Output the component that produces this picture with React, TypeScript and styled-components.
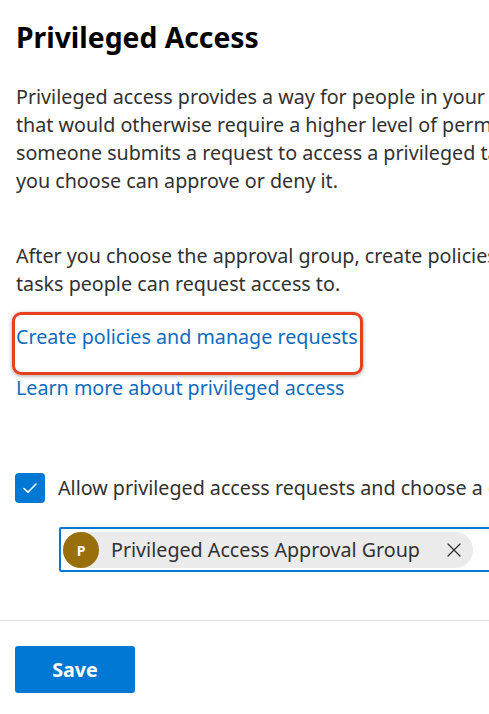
import React from "react";
import styled, { createGlobalStyle } from "styled-components";

const GlobalStyle = createGlobalStyle`
  html, body {
    margin: 0;
    padding: 0;
    background: #ffffff;
    overflow: hidden;
  }
  body {
    font-family: "Noto Sans", "Open Sans", Arial, sans-serif;
    color: #323130;
  }
`;

const Page = styled.div`
  width: 489px;
  height: 714px;
  overflow: hidden;
  background: #ffffff;
  display: flex;
  flex-direction: column;
`;

const Content = styled.div`
  padding: 19px 0 0 16px;
  display: flex;
  flex-direction: column;
  align-items: flex-start;
`;

const Title = styled.h1`
  margin: 0;
  font-size: 28.3px;
  line-height: 36px;
  font-weight: 700;
  color: #000000;
  white-space: nowrap;
`;

const Paragraph = styled.p<{ $top: number }>`
  margin: ${(p) => p.$top}px 0 0 0;
  font-size: 19.7px;
  line-height: 28px;
  white-space: nowrap;
  color: #323130;
`;

const Highlight = styled.div`
  margin: 14px 0 0 -4px;
  padding: 8px 2px 21px 1px;
  border: 3px solid #e8401f;
  border-radius: 9px;
  box-shadow: 0 1px 4px rgba(0, 0, 0, 0.35);
`;

const Link = styled.a<{ $top?: number }>`
  display: block;
  margin-top: ${(p) => p.$top ?? 0}px;
  font-size: 19.7px;
  line-height: 28px;
  color: #0f6cbd;
  text-decoration: none;
  white-space: nowrap;
  cursor: pointer;
`;

const CheckRow = styled.label`
  margin-top: 71px;
  margin-left: -1px;
  display: flex;
  align-items: center;
  gap: 13px;
  font-size: 19.7px;
  line-height: 28px;
  white-space: nowrap;
  color: #323130;
`;

const CheckBox = styled.span`
  flex: none;
  width: 30px;
  height: 30px;
  border-radius: 4px;
  background: #0078d4;
  display: flex;
  align-items: center;
  justify-content: center;
`;

const PickerBox = styled.div`
  margin: 24px 0 0 43px;
  width: 520px;
  height: 36px;
  border: 2px solid #0078d4;
  border-radius: 2px;
  padding: 3px 2px 2px 2px;
  box-sizing: content-box;
  display: flex;
  align-items: flex-start;
`;

const Chip = styled.div`
  height: 36px;
  border-radius: 18px;
  background: #ebebeb;
  display: flex;
  align-items: center;
  padding-right: 10px;
  white-space: nowrap;
`;

const Avatar = styled.span`
  width: 36px;
  height: 36px;
  border-radius: 50%;
  background: #986f0b;
  color: #ffffff;
  font-size: 14px;
  font-weight: 700;
  display: flex;
  align-items: center;
  justify-content: center;
`;

const ChipText = styled.span`
  margin-left: 12px;
  font-size: 19.7px;
  line-height: 28px;
  color: #323130;
`;

const RemoveButton = styled.span`
  margin-left: 25px;
  width: 18px;
  height: 18px;
  display: flex;
  align-items: center;
  justify-content: center;
`;

const Footer = styled.div`
  margin-top: 48px;
  border-top: 1px solid #e3e3e3;
  padding: 25px 0 0 15px;
`;

const SaveButton = styled.button`
  width: 120px;
  height: 47px;
  border: none;
  border-radius: 3px;
  background: #0078d4;
  color: #ffffff;
  font-family: "Noto Sans", "Open Sans", Arial, sans-serif;
  font-size: 19.7px;
  font-weight: 700;
  cursor: pointer;
`;

export default function App() {
  return (
    <Page>
      <GlobalStyle />
      <Content>
        <Title>Privileged Access</Title>
        <Paragraph $top={28}>
          Privileged access provides a way for people in your organization to perform tasks
          <br />
          that would otherwise require a higher level of permissions. When
          <br />
          someone submits a request to access a privileged task, the people in the approval group
          <br />
          you choose can approve or deny it.
        </Paragraph>
        <Paragraph $top={47}>
          After you choose the approval group, create policies that define which
          <br />
          tasks people can request access to.
        </Paragraph>
        <Highlight>
          <Link>Create policies and manage requests</Link>
        </Highlight>
        <Link $top={-1}>Learn more about privileged access</Link>
        <CheckRow>
          <CheckBox>
            <svg width="18" height="18" viewBox="0 0 18 18" fill="none">
              <path d="M3 9.5 L7 13.2 L15 5" stroke="#ffffff" strokeWidth="1.6" strokeLinecap="round" strokeLinejoin="round" />
            </svg>
          </CheckBox>
          Allow privileged access requests and choose a default approval group
        </CheckRow>
        <PickerBox>
          <Chip>
            <Avatar>P</Avatar>
            <ChipText>Privileged Access Approval Group</ChipText>
            <RemoveButton>
              <svg width="16" height="16" viewBox="0 0 16 16" fill="none">
                <path d="M2 2 L14 14 M14 2 L2 14" stroke="#323130" strokeWidth="1.3" strokeLinecap="round" />
              </svg>
            </RemoveButton>
          </Chip>
        </PickerBox>
      </Content>
      <Footer>
        <SaveButton>Save</SaveButton>
      </Footer>
    </Page>
  );
}
